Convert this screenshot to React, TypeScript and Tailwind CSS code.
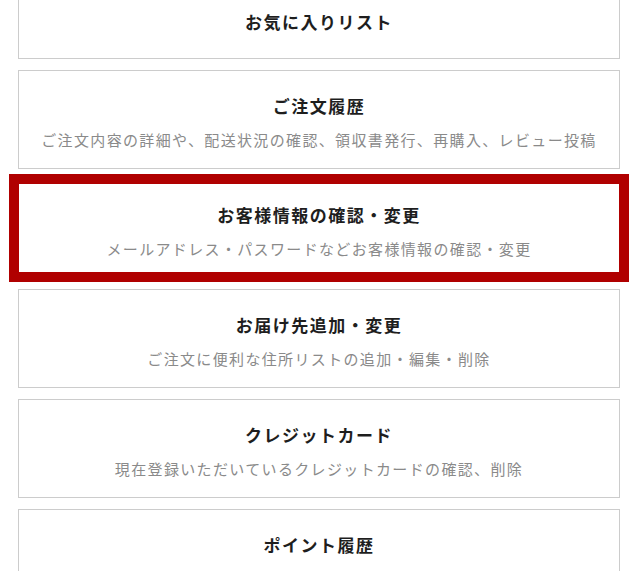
import React from "react";

type Item = { title: string; sub?: string; active?: boolean };

const items: Item[] = [
  { title: "ご注文履歴", sub: "ご注文内容の詳細や、配送状況の確認、領収書発行、再購入、レビュー投稿" },
  { title: "お客様情報の確認・変更", sub: "メールアドレス・パスワードなどお客様情報の確認・変更", active: true },
  { title: "お届け先追加・変更", sub: "ご注文に便利な住所リストの追加・編集・削除" },
  { title: "クレジットカード", sub: "現在登録いただいているクレジットカードの確認、削除" },
  { title: "ポイント履歴" },
];

const Title = ({ children }: { children: React.ReactNode }) => (
  <div className="text-[17px] leading-[24px] h-[24px] font-bold tracking-[1.5px] text-[#1e1e1e] text-center">
    {children}
  </div>
);

const Sub = ({ children }: { children: React.ReactNode }) => (
  <div className="mt-[11px] text-[15px] leading-[22px] h-[22px] tracking-[1.35px] text-[#8a8a8a] text-center whitespace-nowrap">
    {children}
  </div>
);

export default function App() {
  return (
    <div
      className="w-[638px] h-[571px] overflow-hidden bg-white"
      style={{ fontFamily: '"Noto Sans CJK JP", "Noto Sans", sans-serif' }}
    >
      <div className="flex flex-col">
        <div className="mx-[18px] -mt-[15px] border border-[#cccccc] pt-[24px] pb-[24px]">
          <Title>お気に入りリスト</Title>
        </div>
        {items.map((it, i) => {
          const mt = i === 0 ? "mt-[11px]" : i === 1 ? "mt-[5px]" : i === 2 ? "mt-[7px]" : "mt-[11px]";
          if (it.active) {
            return (
              <div key={i} className={`${mt} mx-[9px] border-[10px] border-[#b00000] pt-[19px] pb-[12px]`}>
                <Title>{it.title}</Title>
                <Sub>{it.sub}</Sub>
              </div>
            );
          }
          return (
            <div key={i} className={`${mt} mx-[18px] border border-[#cccccc] pt-[23px] pb-[17px]`}>
              <Title>{it.title}</Title>
              {it.sub && <Sub>{it.sub}</Sub>}
            </div>
          );
        })}
      </div>
    </div>
  );
}
